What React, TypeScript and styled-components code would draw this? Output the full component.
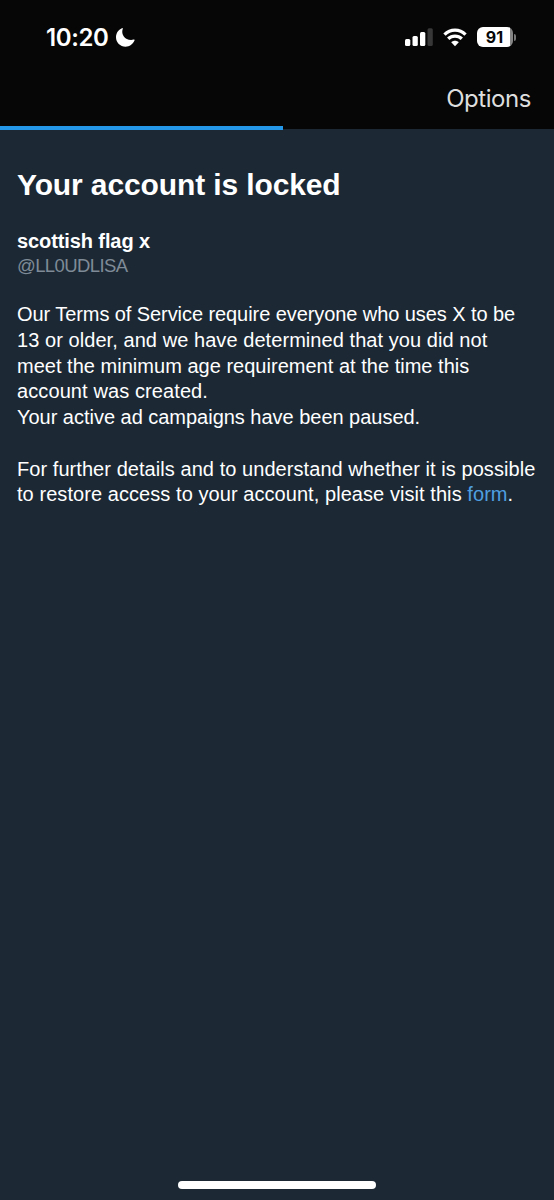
import styled, { createGlobalStyle } from 'styled-components';

const App = () => (
  <Screen>
    <GlobalStyle />
    <Header>
      <StatusBar>
        <Clock>
          <Time>10:20</Time>
          <MoonIcon />
        </Clock>
        <Indicators>
          <SignalIcon />
          <WifiIcon />
          <Battery>
            <BatteryLevel>91</BatteryLevel>
            <BatteryCap />
          </Battery>
        </Indicators>
      </StatusBar>
      <Toolbar>
        <OptionsButton>Options</OptionsButton>
      </Toolbar>
      <Progress />
    </Header>
    <Content>
      <Title>Your account is locked</Title>
      <Name>scottish flag x</Name>
      <Handle>@LL0UDLISA</Handle>
      <Message>
        <Line $tracking={-0.075}>Our Terms of Service require everyone who uses X to be</Line>
        <Line $tracking={0.065}>13 or older, and we have determined that you did not</Line>
        <Line $tracking={0.02}>meet the minimum age requirement at the time this</Line>
        <Line $tracking={0.1}>account was created.</Line>
        <Line $tracking={-0.02}>Your active ad campaigns have been paused.</Line>
      </Message>
      <Message>
        <Line $tracking={0.06}>For further details and to understand whether it is possible</Line>
        <Line $tracking={0.065}>
          to restore access to your account, please visit this <Link href="#">form</Link>.
        </Line>
      </Message>
    </Content>
    <HomeIndicator />
  </Screen>
);

export default App;

const MoonIcon = () => (
  <svg width="21" height="21" viewBox="0 0 21 21" fill="#fff">
    <path d="M6.9 1.2C7.4 .9 8 1.3 7.7 1.9C5.6 8 10.9 14.3 18.6 12.6C19.3 12.4 19.8 12.9 19.5 13.6C17.9 17.4 14.5 19.7 10.6 19.7C5.2 19.7 1 15.6 1 10.3C1 6.2 3.3 2.7 6.9 1.2Z" />
  </svg>
);

const SignalIcon = () => (
  <svg width="29" height="19" viewBox="0 0 29 19" fill="#fff">
    <rect x="0" y="11" width="5.3" height="7" rx="1.5" />
    <rect x="7.5" y="8" width="5.3" height="10" rx="1.5" />
    <rect x="15" y="4" width="5.3" height="14" rx="1.5" />
    <rect x="22.5" y="0.2" width="5.3" height="17.8" rx="1.5" fill="#373737" />
  </svg>
);

const WifiIcon = () => (
  <svg width="24" height="19" viewBox="0 0 24 19" fill="none" stroke="#fff" strokeWidth="3.3">
    <path d="M1.5 6.6C7.4 .6 16.6 .6 22.5 6.6" />
    <path d="M5.2 10.8C9 7.1 15 7.1 18.8 10.8" />
    <path d="M12 18.2L8.2 14.3C10.3 12.3 13.7 12.3 15.8 14.3Z" fill="#fff" stroke="none" />
  </svg>
);

/** Styled components */

const GlobalStyle = createGlobalStyle`
  body {
    margin: 0;
    background: #1c2935;
  }
`;

const Screen = styled.div`
  display: flex;
  flex-direction: column;
  box-sizing: border-box;
  width: 554px;
  height: 1200px;
  padding-bottom: 11px;
  overflow: hidden;
  color: #fff;
  background: #1c2935;
  font-family: "Liberation Sans", Arial, sans-serif;
`;

const Header = styled.header`
  flex: none;
  display: flex;
  flex-direction: column;
  height: 129px;
  background: #060606;
`;

const StatusBar = styled.div`
  display: flex;
  align-items: center;
  justify-content: space-between;
  height: 74px;
  padding: 0 38px 0 46px;
`;

const Clock = styled.div`
  display: flex;
  align-items: center;
  gap: 6px;
`;

const Time = styled.span`
  width: 63px;
  padding-top: 2px;
  font: 600 24px/30px Inter, sans-serif;
  letter-spacing: -0.4px;
`;

const Indicators = styled.div`
  display: flex;
  align-items: center;
  gap: 9px;
`;

const Battery = styled.div`
  display: flex;
  align-items: center;
  gap: 1px;
  padding-left: 1px;
`;

const BatteryLevel = styled.span`
  width: 36px;
  height: 20px;
  padding-right: 1px;
  box-sizing: border-box;
  border-radius: 6px;
  color: #060606;
  background: linear-gradient(to right, #fff 33px, #858585 33px);
  font: 700 16px/20px Inter, sans-serif;
  text-align: center;
`;

const BatteryCap = styled.span`
  width: 2px;
  height: 7px;
  border-radius: 0 2px 2px 0;
  background: #777;
`;

const Toolbar = styled.div`
  flex: 1;
  display: flex;
  justify-content: flex-end;
  padding: 10px 23px 0;
`;

const OptionsButton = styled.button`
  height: 30px;
  padding: 0;
  border: 0;
  color: #dedede;
  background: none;
  font: 400 24px/30px Inter, sans-serif;
  letter-spacing: -0.45px;
`;

const Progress = styled.div`
  width: 283px;
  height: 4px;
  margin-bottom: -1px;
  background: #2597e8;
`;

const Content = styled.main`
  flex: 1;
  padding: 38px 17px 0;
`;

const Title = styled.h1`
  margin: 0;
  font-size: 30px;
  line-height: 36px;
  letter-spacing: -0.12px;
  white-space: nowrap;
`;

const Name = styled.div`
  margin-top: 26px;
  font-size: 20px;
  font-weight: 700;
  line-height: 25px;
  letter-spacing: -0.1px;
`;

const Handle = styled.div`
  color: #7f8b97;
  font-size: 18.5px;
  line-height: 24px;
  letter-spacing: -0.6px;
`;

const Message = styled.p`
  margin: 0 0 25.7px;

  ${Handle} + & {
    margin-top: 24.3px;
  }
`;

const Line = styled.span<{ $tracking: number }>`
  display: block;
  font-size: 20px;
  line-height: 25.7px;
  letter-spacing: ${({ $tracking }) => $tracking}px;
  white-space: nowrap;
`;

const Link = styled.a`
  color: #4f9fe0;
  text-decoration: none;
`;

const HomeIndicator = styled.div`
  align-self: center;
  width: 198px;
  height: 8px;
  border-radius: 4px;
  background: #fff;
`;
